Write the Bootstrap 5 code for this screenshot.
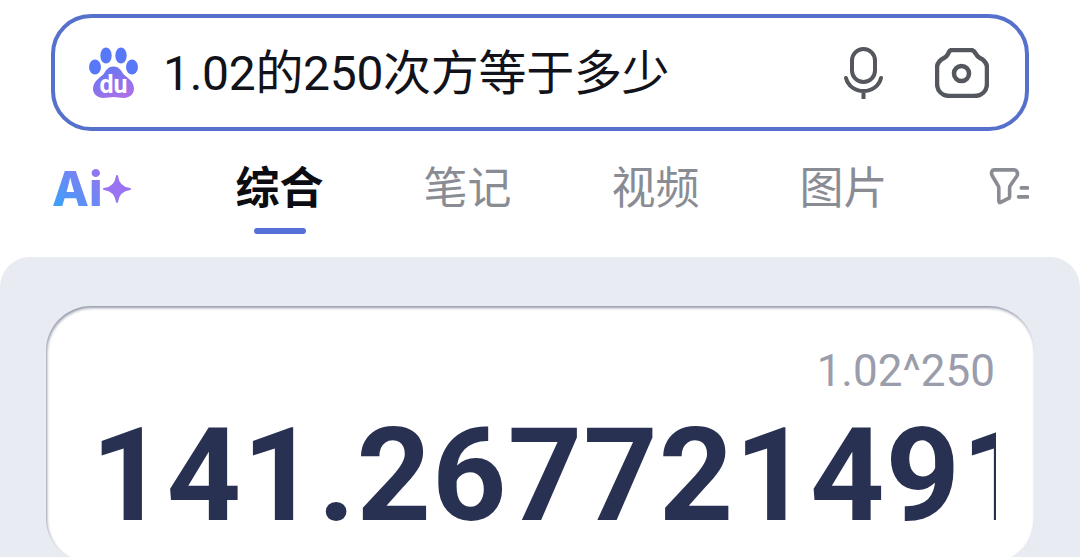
<!DOCTYPE html>
<html lang="zh-CN">
<head>
  <meta charset="UTF-8">
  <title>1.02的250次方等于多少</title>
  <meta name="viewport" content="width=device-width, initial-scale=1.0">
  <link href="https://cdn.jsdelivr.net/npm/bootstrap@5.3.0/dist/css/bootstrap.min.css" rel="stylesheet">
  <style>
    html, body {
      height: 100%;
    }
    body {
      background: #fff;
      font-family: Roboto, "Noto Sans CJK SC", sans-serif;
      overflow: hidden;
    }
    .search-box {
      height: 117px;
      margin: 14px 51px 0;
      padding: 0 36px 0 34px;
      border: 4px solid #5571cb;
      border-radius: 40px;
    }
    .search-text {
      margin: 2px 0 0 24px;
      font-size: 48px;
      line-height: 1;
      letter-spacing: -.3px;
      color: #12131a;
    }
    .mic-icon {
      margin-right: 51px;
    }
    .tab-row {
      height: 126px;
      padding: 0 51px 10px 52px;
    }
    .tab-item {
      position: relative;
      width: 88px;
      margin-right: 100px;
      font-size: 44px;
      line-height: 1;
      text-align: center;
      white-space: nowrap;
      color: #8a8c94;
    }
    .tab-item.active-tab {
      font-weight: 700;
      color: #0c0d12;
    }
    .active-tab::after {
      content: "";
      position: absolute;
      left: 18px;
      top: 61px;
      width: 52px;
      height: 6px;
      border-radius: 3px;
      background: #5571d8;
    }
    .ai-logo {
      width: 82px;
      margin-right: 105px;
    }
    .ai-text {
      font-family: Inter, Roboto, sans-serif;
      font-size: 48px;
      font-weight: 800;
      line-height: 1;
      color: transparent;
      background: linear-gradient(45deg, #2fa6fb, #a06ff0);
      -webkit-background-clip: text;
      background-clip: text;
    }
    .ai-star {
      margin-left: auto;
    }
    .result-panel {
      height: 300px;
      padding: 49px 46px 0;
      background: #e8ebf2;
      border-radius: 30px 30px 0 0;
    }
    .result-card {
      height: 257px;
      padding: 39px 38px 0 45px;
      background: #fff;
      border-radius: 45px;
      box-shadow: inset 1px 2px 3px rgba(110, 116, 140, .75);
    }
    .result-expr {
      margin-right: 1px;
      font-size: 44px;
      line-height: 52px;
      color: #9a9dab;
    }
    .result-value {
      width: 905px;
      margin-top: 13px;
      overflow: hidden;
      font-size: 130px;
      font-weight: 700;
      line-height: 132px;
      letter-spacing: 1px;
      white-space: nowrap;
      color: #283152;
    }
  </style>
</head>
<body>

<div class="search-box d-flex align-items-center">
  <svg width="50" height="52" viewBox="0 0 50 52">
    <defs>
      <linearGradient id="pawFill" x1="0" y1="0" x2="0.6" y2="1">
        <stop offset="0" stop-color="#5b78f5"/>
        <stop offset="1" stop-color="#a870e8"/>
      </linearGradient>
    </defs>
    <ellipse cx="6" cy="20" rx="6" ry="7.500" fill="#5878f8"/>
    <ellipse cx="17" cy="8.500" rx="5.700" ry="8" fill="#5878f8"/>
    <ellipse cx="32" cy="8.500" rx="5.700" ry="8" fill="#5878f8"/>
    <ellipse cx="43" cy="20" rx="6" ry="7.500" fill="#5878f8"/>
    <path d="M24.500 19.500c5 0 7.500 3.500 9.500 7 2 3 11 7 11 15 0 6-5 9.500-10 9.500-4 0-7-1-10.500-1S18 51 14 51c-5 0-10-3.500-10-9.500 0-8 9-12 11-15 2-3.500 4.500-7 9.500-7z" fill="url(#pawFill)"/>
    <text x="24.500" y="46" text-anchor="middle" font-family="Roboto, sans-serif" font-size="25" font-weight="700" fill="#fff">du</text>
  </svg>
  <span class="search-text flex-grow-1">1.02的250次方等于多少</span>
  <svg class="mic-icon" width="40" height="52" viewBox="0 0 40 52" fill="none" stroke="#55575e" stroke-width="4" stroke-linecap="round">
    <rect x="8" y="2" width="23" height="33" rx="11.500"/>
    <path d="M2 31c2 8 9 13 17.500 13S35 39 37 31M19.500 44v7"/>
  </svg>
  <svg width="54" height="50" viewBox="0 0 54 50" fill="none" stroke="#55575e" stroke-width="4.500" stroke-linejoin="round">
    <path d="M17 2h19c3 0 4 2 5 4 1 2 2 3 4 4 4 2 7 5 7 10v15c0 8-5 13-13 13H15C7 48 2 43 2 35V20c0-5 3-8 7-10 2-1 3-2 4-4 1-2 1-4 4-4z"/>
    <circle cx="26.500" cy="25.500" r="7.500"/>
  </svg>
</div>

<div class="tab-row d-flex align-items-center">
  <div class="ai-logo d-flex align-items-center">
    <span class="ai-text">Ai</span>
    <svg class="ai-star" width="28" height="28" viewBox="0 0 28 28">
      <path d="M14 1c1 8 5 12 13 13-8 1-12 5-13 13-1-8-5-12-13-13 8-1 12-5 13-13z" fill="#9a73f2" stroke="#9a73f2" stroke-width="2" stroke-linejoin="round"/>
    </svg>
  </div>
  <div class="tab-item active-tab">综合</div>
  <div class="tab-item">笔记</div>
  <div class="tab-item">视频</div>
  <div class="tab-item">图片</div>
  <svg class="ms-auto mb-1" width="46" height="44" viewBox="0 0 46 44" fill="none" stroke="#8a8c94" stroke-width="4" stroke-linecap="round" stroke-linejoin="round">
    <path d="M7 3h22c3 0 5 4 3 7l-7 10c-1 1-1 2-1 3v10c0 1-1 2-2 2l-8 4c-1 1-2 0-2-2V23c0-1 0-2-1-3L5 10C3 7 4 3 7 3z"/>
    <path d="M37 23h7M34 33h10"/>
  </svg>
</div>

<div class="result-panel overflow-hidden">
  <div class="result-card">
    <div class="result-expr text-end">1.02^250</div>
    <div class="result-value">141.26772149141</div>
  </div>
</div>

<script src="https://cdn.jsdelivr.net/npm/bootstrap@5.3.0/dist/js/bootstrap.bundle.min.js"></script>
</body>
</html>
